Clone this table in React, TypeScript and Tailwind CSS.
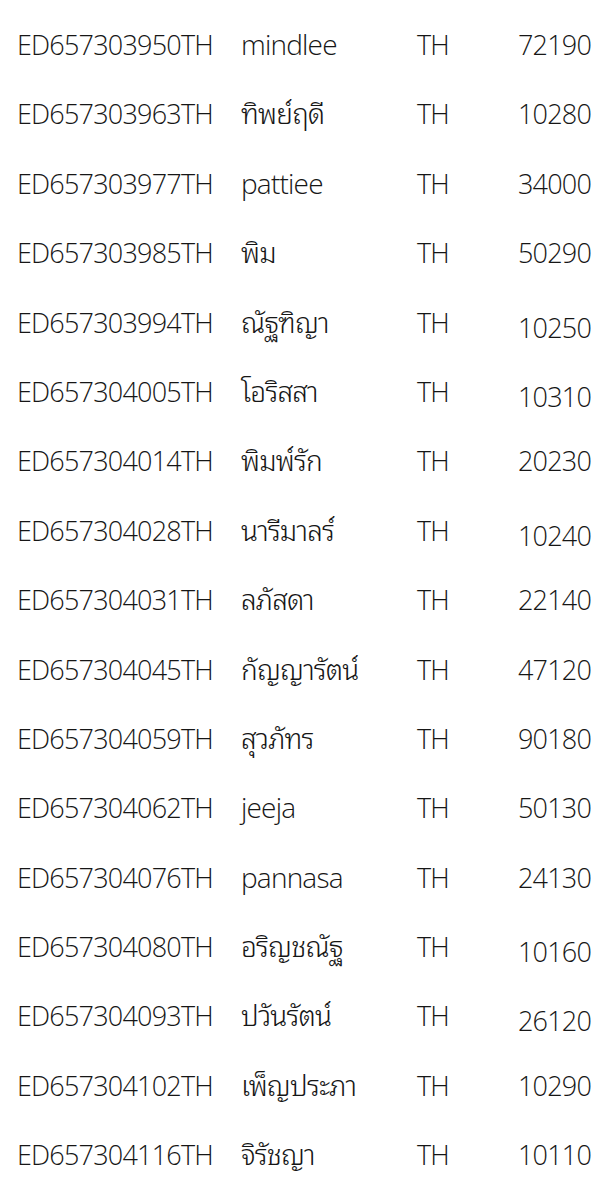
const rows: [string, string, string, boolean?][] = [
  ['ED657303950TH', 'mindlee', '72190'],
  ['ED657303963TH', 'ทิพย์ฤดี', '10280'],
  ['ED657303977TH', 'pattiee', '34000'],
  ['ED657303985TH', 'พิม', '50290'],
  ['ED657303994TH', 'ณัฐฑิญา', '10250', true],
  ['ED657304005TH', 'โอริสสา', '10310', true],
  ['ED657304014TH', 'พิมพ์รัก', '20230'],
  ['ED657304028TH', 'นารีมาลร์', '10240', true],
  ['ED657304031TH', 'ลภัสดา', '22140'],
  ['ED657304045TH', 'กัญญารัตน์', '47120'],
  ['ED657304059TH', 'สุวภัทร', '90180'],
  ['ED657304062TH', 'jeeja', '50130'],
  ['ED657304076TH', 'pannasa', '24130'],
  ['ED657304080TH', 'อริญชณัฐ', '10160', true],
  ['ED657304093TH', 'ปวันรัตน์', '26120', true],
  ['ED657304102TH', 'เพ็ญประภา', '10290'],
  ['ED657304116TH', 'จิรัชญา', '10110'],
];

export default function App() {
  return (
    <div
      className="min-h-[1200px] w-[602px] bg-white pt-[10px] text-[#161616] text-[27px] font-light tracking-[-0.8px]"
      style={{ fontFamily: '"Open Sans", "Noto Sans Thai Looped", "Noto Sans Thai", "Noto Sans", sans-serif' }}
    >
      {rows.map(([code, name, zip, low]) => (
        <div
          key={code}
          className="grid h-[69.4px] grid-cols-[224px_176px_101px_1fr] pl-[17px] leading-[69.4px] whitespace-nowrap"
        >
          <span>{code}</span>
          <span className="text-[28px]">{name}</span>
          <span>TH</span>
          <span className={low ? 'mt-[5px]' : ''}>{zip}</span>
        </div>
      ))}
    </div>
  );
}
